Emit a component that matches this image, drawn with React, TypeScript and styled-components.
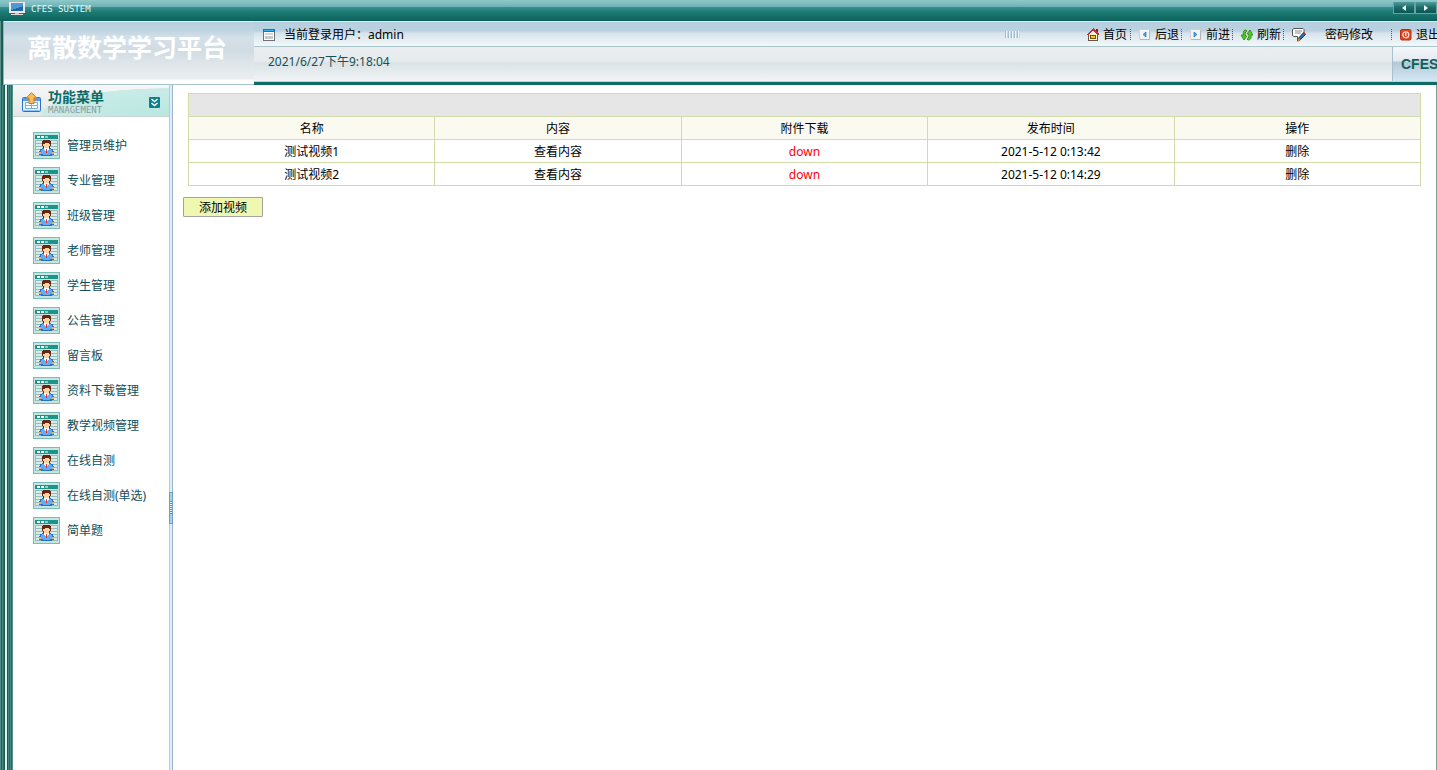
import React from 'react';
import styled, { createGlobalStyle } from 'styled-components';

const GlobalStyle = createGlobalStyle`
  * { box-sizing: border-box; }
  html, body { margin: 0; padding: 0; }
  body {
    overflow-x: hidden;
    background: #fff;
    color: #000;
    font: 12px/18px "Noto Sans", "Noto Sans CJK SC", sans-serif;
  }
  a { color: inherit; text-decoration: none; }
`;

const Page = styled.div`
  display: flex;
  flex-direction: column;
  min-height: 100vh;
  overflow: hidden;
`;

const TopBar = styled.div`
  display: flex;
  align-items: flex-start;
  height: 21px;
  padding: 2px 0 0 9px;
  background: linear-gradient(#8fc8ca 0, #6ab1b4 7px, #37908f 7px, #1d7a74 12px, #0d665e 20px, #0a5a54 21px);
`;

const SystemName = styled.span`
  flex: 1;
  margin-left: 6px;
  color: #e6f7f6;
  font: 9px/14px "DejaVu Sans Mono", monospace;
`;

const ArrowButton = styled.button`
  display: flex;
  align-items: center;
  justify-content: center;
  width: 22px;
  height: 12px;
  padding: 0;
  border: 1px solid #63a5a3;
  border-top: 0;
  background: linear-gradient(#4f9c9c, #1c6c69 50%, #0d5653);
`;

const Header = styled.header`
  display: flex;
  height: 64px;
`;

const HeaderRail = styled.div`
  width: 4px;
  background: linear-gradient(90deg, #5b918b 0 1px, #1d5d56 1px 3px, #8fb5b3 3px);
`;

const Brand = styled.h1`
  width: 250px;
  margin: 0;
  padding: 7px 0 0 23px;
  border-top: 1px solid #e4eef2;
  border-bottom: 1px solid #a5c3cc;
  background: linear-gradient(#b7cfdd 0, #c0d5e1 9px, #d5e1e9 16px, #d0dbe2 28px, #dfe6ea 42px, #e9eef0 57px, #fff 58px);
  color: #fff;
  font: bold 25px/34px "Noto Sans CJK SC", sans-serif;
  white-space: nowrap;
`;

const HeaderMain = styled.div`
  flex: 1;
  min-width: 0;
  border-bottom: 3px solid #0d6c66;
`;

const UserBar = styled.div`
  display: flex;
  align-items: center;
  height: 26px;
  margin-right: -3px;
  padding: 1px 0 0 9px;
  border-top: 1px solid #d9e6ec;
  border-bottom: 1px solid #a9c6cb;
  background: linear-gradient(#b7cfdf 0, #bad1e0 9px, #d5e3eb 11px, #f4f8fa 24px);
`;

const CurrentUser = styled.span`
  flex: 1;
  margin-left: 9px;
  white-space: nowrap;
`;

const Grip = styled.span`
  width: 15px;
  height: 7px;
  margin-right: 59px;
  background: repeating-linear-gradient(90deg, #a3bccb 0 1px, #edf5f9 1px 2px, #c6d8e3 2px 3px);
`;

const Tools = styled.nav`
  display: flex;
`;

const Tool = styled.a<{ $gap?: number; $end?: number }>`
  display: flex;
  align-items: center;
  gap: ${(p) => p.$gap ?? 4}px;
  height: 18px;
  padding: 0 ${(p) => p.$end ?? 2}px 0 8px;
  white-space: nowrap;

  &::after {
    content: '';
    height: 11px;
    margin-left: ${(p) => -(p.$gap ?? 4) + (p.$end ?? 2)}px;
    margin-right: ${(p) => -(p.$end ?? 2)}px;
    border-right: 1px dotted #4b5c66;
  }
  &:last-child { padding-right: 0; }
  &:last-child::after { display: none; }
`;

const InfoBar = styled.div`
  display: flex;
  justify-content: space-between;
  height: 35px;
  padding-left: 14px;
  border-bottom: 1px solid #c3d2da;
  background: linear-gradient(#e9edf0 0, #e6ebee 14px, #dae3e6 16px, #f1f4f6 34px);
`;

const Clock = styled.time`
  padding-top: 6px;
  color: #164f57;
`;

const Badge = styled.strong`
  width: 45px;
  padding-left: 8px;
  border-left: 1px solid #a9c0ca;
  background: linear-gradient(#f5f8fb 0, #e2e9f0 14px, #b3c8d4 15px, #d3e7f4 34px);
  color: #0f605d;
  font: bold 14px/34px "Liberation Sans", sans-serif;
`;

const Body = styled.div`
  display: flex;
  flex: 1;
`;

const Rail = styled.div`
  width: 13px;
  background: linear-gradient(
    90deg,
    #4e8b84 0 1px, #1f665f 1px 2px, #3f847d 2px 3px, #2b6e67 3px 4px, #1e5a54 4px 5px,
    #e3f1ec 5px 7px, #1e5a54 7px 8px, #43857f 8px 9px, #2a6c65 9px 10px,
    #43857f 10px 11px, #2a6c65 11px 12px, #54918b 12px 13px
  );
`;

const Sidebar = styled.aside`
  width: 156px;
`;

const SidebarHead = styled.div`
  display: flex;
  align-items: center;
  height: 32px;
  padding: 3px 9px 0 9px;
  border-bottom: 1px solid #ccd5d6;
  background:
    radial-gradient(ellipse 130px 28px at 100% 100%, #b9e7e1 0, #c9ebe6 98%, transparent 100%),
    linear-gradient(#f6f7f8, #e3e7e9);
`;

const SidebarTitle = styled.div`
  flex: 1;
  margin-left: 6px;
`;

const TitleText = styled.h2`
  margin: 0;
  color: #0e6a66;
  font: bold 14px/16px "Liberation Sans", "Noto Sans CJK SC", sans-serif;
`;

const TitleNote = styled.div`
  color: #8b9c9f;
  font: 9px/11px "DejaVu Sans Mono", monospace;
`;

const CollapseButton = styled.button`
  display: flex;
  width: 11px;
  height: 11px;
  padding: 0;
  border: 0;
  border-radius: 1px;
  background: #08818c;
`;

const Menu = styled.ul`
  display: flex;
  flex-direction: column;
  gap: 8px;
  margin: 0;
  padding: 15px 0 0 20px;
  list-style: none;
`;

const MenuLink = styled.a`
  display: flex;
  align-items: center;
  gap: 7px;
  height: 27px;
  color: #0f505a;
  white-space: nowrap;
`;

const Splitter = styled.div`
  display: flex;
  flex-direction: column;
  justify-content: center;
  width: 4px;
  padding-top: 160px;
  background: linear-gradient(90deg, #b4cbdc 0 1px, #dcecf8 1px 3px, #9db5c6 3px);
`;

const SplitterHandle = styled.button`
  height: 32px;
  padding: 0;
  border: 1px solid #6aa5bd;
  background:
    repeating-linear-gradient(#6f8791 0 1px, #f2f8fb 1px 2px) center / 4px 13px no-repeat,
    #a8d0e2;
`;

const Content = styled.main`
  flex: 1;
  min-width: 0;
  padding: 8px 15px 0 10px;
  border-right: 1px solid #7ba196;
`;

const DataTable = styled.table`
  width: calc(100% - 5px);
  margin-left: 5px;
  border-collapse: collapse;
  table-layout: fixed;
  text-align: center;
`;

const Cell = styled.td`
  height: 23px;
  padding: 2px 0 0;
  border: 1px solid #d2dcaa;
  line-height: 18px;
`;

const HeadCell = styled(Cell).attrs({ as: 'th' })`
  background: #fafaf1;
  font-weight: normal;
`;

const BannerCell = styled(Cell)`
  background: #e6e6e6;
`;

const DownLink = styled.a`
  color: #f00;
`;

const AddButton = styled.button`
  display: block;
  width: 80px;
  height: 20px;
  margin-top: 11px;
  padding: 2px 0 0;
  border: 1px solid #a3a3a3;
  border-radius: 1px;
  background: #eff7b1;
  color: #000;
  font: inherit;
  line-height: 16px;
`;

const MonitorIcon = () => (
  <svg width="16" height="14" viewBox="0 0 16 14" shapeRendering="crispEdges">
    <rect width="16" height="11" fill="#f0e8e4" />
    <rect x="2" y="1" width="12" height="8" fill="#1f67a9" />
    <path d="M2 1h12v3L2 8z" fill="#4c9ad4" />
    <rect x="6" y="11" width="4" height="1" fill="#c9c3c3" />
    <rect x="2" y="12" width="12" height="1" fill="#e3dcda" />
  </svg>
);

const WindowIcon = () => (
  <svg width="12" height="12" viewBox="0 0 12 12" shapeRendering="crispEdges">
    <rect width="12" height="12" fill="#6d7274" />
    <rect x="1" y="3" width="10" height="8" fill="#fff" />
    <rect width="12" height="3" fill="#1670c8" />
    <rect x="1" y="1" width="10" height="1" fill="#32b5f4" />
    <rect x="2" y="4" width="8" height="2" fill="#d3d6d8" />
    <rect x="2" y="7" width="8" height="3" fill="#c5c8ca" />
  </svg>
);

const HomeIcon = () => (
  <svg width="12" height="14" viewBox="0 0 12 14" shapeRendering="crispEdges">
    <rect x="9" y="1" width="2" height="4" fill="#7d1f1b" />
    <path d="M1 7h10v6H1z" fill="#66584a" />
    <path d="M2 6l4-4 4 4v6H2z" fill="#fff4dc" />
    <path d="M0 7V6l6-6 6 6v1h-1L6 3 1 7z" fill="#d9262f" />
    <rect x="3" y="7" width="6" height="4" fill="#7a5008" />
    <rect x="4" y="8" width="4" height="2" fill="#ffc81e" />
  </svg>
);

const StepIcon = ({ forward = false }: { forward?: boolean }) => (
  <svg width="12" height="12" viewBox="0 0 12 12">
    <rect x="0.5" y="0.5" width="10" height="10" rx="1" fill="#f5f4f5" stroke="#d3cfd3" />
    <path d="M1 10.500h9.500v-9" fill="none" stroke="#b8b4ba" />
    <path d={forward ? 'M4 3v5l3-2.500z' : 'M7 3v5L4 5.500z'} fill="#42a5ea" stroke="#2183ca" strokeWidth="0.800" />
  </svg>
);

const RefreshIcon = () => (
  <svg width="12" height="12" viewBox="0 0 12 12">
    <path d="M5 1C2 1 2 4 2.500 6H0l3 5 3-4H4.500C4 5 4 3 6 2zM7 11c3 0 3.500-3 3-5H12L9 1 6 5h1.500c.5 2 .5 4-1.500 5z" fill="#53cc21" stroke="#1f7d0f" strokeWidth="0.800" />
  </svg>
);

const NoteIcon = () => (
  <svg width="14" height="14" viewBox="0 0 14 14">
    <path d="M.5 1.500 2 .5h9l1 1v6l-1 1H8l-2.500 3v-3H2l-1.500-1z" fill="#fff" stroke="#555" />
    <path d="M3 3h7M3 5h6" stroke="#888" />
    <path d="M11.500 4.500l2 2-6 6-2 .5.5-2z" fill="#2672b8" stroke="#173b66" strokeWidth="1" />
    <path d="M6.500 10l2 2-3 1.500z" fill="#f18b23" />
    <path d="M11 5l2 2 1-1-2-2z" fill="#d32626" />
  </svg>
);

const PowerIcon = () => (
  <svg width="12" height="12" viewBox="0 0 12 12">
    <rect x="0.500" y="0.500" width="10.500" height="10.500" rx="1.500" fill="#e1451f" stroke="#b72f16" />
    <circle cx="5.800" cy="5.800" r="3" fill="none" stroke="#ffe0d2" strokeWidth="1.200" />
    <path d="M5.800 4v3" stroke="#fff" strokeWidth="1.200" />
  </svg>
);

const MenuHeadIcon = () => (
  <svg width="20" height="21" viewBox="0 0 20 21">
    <rect x="0.500" y="5.500" width="18" height="14" rx="1" fill="#e9f4ff" stroke="#2b72cd" />
    <path d="M1 6h17v3H1z" fill="#5b9fea" />
    <path d="M3.500 10.500h12v6h-12zM3.500 13.500h12M9.500 10.500v6" fill="#fff" stroke="#72aeea" />
    <path d="M1 18.500h17" stroke="#8fc0f3" />
    <path d="M9.500.7l5.300 5.300h-2.800v5.500h-5V6H4.200z" fill="#ffbd4d" stroke="#d07a13" />
  </svg>
);

const MemberIcon = () => (
  <svg width="27" height="27" viewBox="0 0 27 27" shapeRendering="crispEdges">
    <rect width="27" height="27" fill="#79bcb7" />
    <rect x="1" y="1" width="25" height="25" fill="#c6e4e0" />
    <rect x="2" y="3" width="23" height="4" fill="#1d938a" />
    <path d="M4 4h3v2H4zM8 4h3v2H8z" fill="#fff" />
    <path d="M12 4h3v2h-3z" fill="#8fd0ca" />
    <rect x="2" y="8" width="23" height="16" fill="#93bdb9" />
    <path d="M3 9h21v2H3zM3 12h21v2H3zM3 15h21v2H3zM3 18h21v2H3zM3 21h21v2H3z" fill="#dcebe9" />
    <path d="M10 8h7v1h1v5h-1v2h-7v-2H9V9h1z" fill="#6b2410" />
    <path d="M10 12h2v-1h4v1h1v2h-1v2h-5v-2h-1z" fill="#ffd2a0" />
    <path d="M9 16h9v1h2v2h1v4h-2v1H8v-1H6v-4h1v-2h2z" fill="#2a70c6" />
    <path d="M9 17h9v1h1v4h-2v1h-7v-1H8v-4h1z" fill="#62adf4" />
    <path d="M11 16h5v2h-1v1h-3v-1h-1z" fill="#fff" />
    <path d="M13 17h1v4h-1z" fill="#e0312c" />
    <path d="M6 20h2v2H6zM19 20h2v2h-2z" fill="#f2ad58" />
  </svg>
);

const ChevronsIcon = () => (
  <svg width="11" height="11" viewBox="0 0 11 11">
    <path d="M2.500 2l3 2.500 3-2.500M2.500 6l3 2.500 3-2.500" fill="none" stroke="#fff" strokeWidth="1.500" />
  </svg>
);

const ArrowIcon = ({ right = false }: { right?: boolean }) => (
  <svg width="6" height="6" viewBox="0 0 6 6">
    <path d={right ? 'M1 0v6l4-3z' : 'M5 0v6L1 3z'} fill="#eefafa" />
  </svg>
);

const menu = [
  '管理员维护', '专业管理', '班级管理', '老师管理', '学生管理', '公告管理',
  '留言板', '资料下载管理', '教学视频管理', '在线自测', '在线自测(单选)', '简单题',
];

const columns = ['名称', '内容', '附件下载', '发布时间', '操作'];

const videos = [
  { name: '测试视频1', time: '2021-5-12 0:13:42' },
  { name: '测试视频2', time: '2021-5-12 0:14:29' },
];

export default function App() {
  return (
    <Page>
      <GlobalStyle />
      <TopBar>
        <MonitorIcon />
        <SystemName>CFES SUSTEM</SystemName>
        <ArrowButton aria-label="向左"><ArrowIcon /></ArrowButton>
        <ArrowButton aria-label="向右"><ArrowIcon right /></ArrowButton>
      </TopBar>

      <Header>
        <HeaderRail />
        <Brand>离散数学学习平台</Brand>
        <HeaderMain>
          <UserBar>
            <WindowIcon />
            <CurrentUser>当前登录用户：admin</CurrentUser>
            <Grip />
            <Tools>
              <Tool href="#" $end={3}><HomeIcon />首页</Tool>
              <Tool href="#"><StepIcon />后退</Tool>
              <Tool href="#"><StepIcon forward />前进</Tool>
              <Tool href="#"><RefreshIcon />刷新</Tool>
              <Tool href="#" $gap={19} $end={18}><NoteIcon />密码修改</Tool>
              <Tool href="#"><PowerIcon />退出</Tool>
            </Tools>
          </UserBar>
          <InfoBar>
            <Clock>2021/6/27下午9:18:04</Clock>
            <Badge>CFES</Badge>
          </InfoBar>
        </HeaderMain>
      </Header>

      <Body>
        <Rail />
        <Sidebar>
          <SidebarHead>
            <MenuHeadIcon />
            <SidebarTitle>
              <TitleText>功能菜单</TitleText>
              <TitleNote>MANAGEMENT</TitleNote>
            </SidebarTitle>
            <CollapseButton aria-label="收起"><ChevronsIcon /></CollapseButton>
          </SidebarHead>
          <Menu>
            {menu.map((label) => (
              <li key={label}>
                <MenuLink href="#"><MemberIcon />{label}</MenuLink>
              </li>
            ))}
          </Menu>
        </Sidebar>
        <Splitter><SplitterHandle aria-label="调整宽度" /></Splitter>
        <Content>
          <DataTable>
            <thead>
              <tr><BannerCell colSpan={5} /></tr>
              <tr>{columns.map((c) => <HeadCell key={c}>{c}</HeadCell>)}</tr>
            </thead>
            <tbody>
              {videos.map((v) => (
                <tr key={v.name}>
                  <Cell>{v.name}</Cell>
                  <Cell><a href="#">查看内容</a></Cell>
                  <Cell><DownLink href="#">down</DownLink></Cell>
                  <Cell>{v.time}</Cell>
                  <Cell><a href="#">删除</a></Cell>
                </tr>
              ))}
            </tbody>
          </DataTable>
          <AddButton>添加视频</AddButton>
        </Content>
      </Body>
    </Page>
  );
}
